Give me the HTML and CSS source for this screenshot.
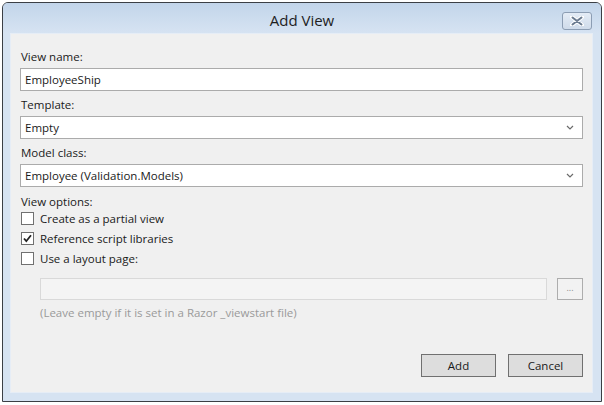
FILE: index.html
```html
<!DOCTYPE html>
<html>
<head>
<meta charset="utf-8">
<link rel="stylesheet" href="styles.css">
</head>
<body>
<div class="window">
  <div class="titlebar">
    <div class="title">Add View</div>
    <div class="close">
      <svg width="14" height="10" viewBox="0 0 14 10">
        <path d="M2 1 L12 9 M12 1 L2 9" stroke="#ffffff" stroke-width="4" stroke-linecap="round"/>
        <path d="M2.5 1.5 L11.5 8.5 M11.5 1.5 L2.5 8.5" stroke="#6b7b90" stroke-width="2" stroke-linecap="round"/>
      </svg>
    </div>
  </div>
  <div class="client">
    <div class="label first">View name:</div>
    <div class="field">EmployeeShip</div>
    <div class="label">Template:</div>
    <div class="field select">Empty<span class="chev"><svg width="8" height="5" viewBox="0 0 8 5"><path d="M1 1 L4 4 L7 1" fill="none" stroke="#6a6a6a" stroke-width="1.2"/></svg></span></div>
    <div class="label">Model class:</div>
    <div class="field select">Employee (Validation.Models)<span class="chev"><svg width="8" height="5" viewBox="0 0 8 5"><path d="M1 1 L4 4 L7 1" fill="none" stroke="#6a6a6a" stroke-width="1.2"/></svg></span></div>
    <div class="label opts">View options:</div>
    <div class="check-row"><span class="box"></span><span>Create as a partial view</span></div>
    <div class="check-row"><span class="box"><svg width="11" height="11" viewBox="0 0 11 11"><path d="M2 5.5 L4.3 8.2 L9 2.2" fill="none" stroke="#222" stroke-width="1.8"/></svg></span><span>Reference script libraries</span></div>
    <div class="check-row"><span class="box"></span><span>Use a layout page:</span></div>
    <div class="layout-row">
      <div class="layout-input"></div>
      <div class="browse">...</div>
    </div>
    <div class="hint">(Leave empty if it is set in a Razor _viewstart file)</div>
    <div class="buttons">
      <div class="btn">Add</div>
      <div class="btn">Cancel</div>
    </div>
  </div>
</div>
</body>
</html>
```
FILE: styles.css
```css
html, body {
  margin: 0;
  padding: 0;
  background: #ffffff;
  width: 604px;
  height: 405px;
  overflow: hidden;
}
body {
  font-family: "Open Sans", "Noto Sans", sans-serif;
  font-size: 11.5px;
  color: #1a1a1a;
}
.window {
  position: relative;
  margin: 2px 0 0 2px;
  width: 598px;
  height: 398px;
  border: 1px solid #3b3f45;
  border-radius: 6px 6px 0 0;
  background: #d6e3f2;
  display: flex;
  flex-direction: column;
}
.titlebar {
  height: 30px;
  flex: none;
  border-radius: 5px 5px 0 0;
  background: linear-gradient(#c2d5ea, #d6e3f2);
  display: flex;
  align-items: center;
  justify-content: center;
  position: relative;
}
.title {
  font-size: 15px;
  color: #1e1e1e;
  margin-top: 4px;
}
.close {
  position: absolute;
  right: 9px;
  top: 9px;
  width: 28px;
  height: 16px;
  border: 1px solid #8c9db3;
  border-radius: 3px;
  background: linear-gradient(#e4ecf6, #cfdbea);
  display: flex;
  align-items: center;
  justify-content: center;
}
.client {
  margin: 0 8px 8px 7px;
  flex: 1;
  background: #f0f0f0;
  border: 1px solid #e6edf6;
  padding: 0 9px 0 9px;
  display: flex;
  flex-direction: column;
}
.label {
  height: 16px;
  line-height: 16px;
  margin: 6px 0 3px 1px;
}
.label.first {
  margin-top: 15px;
}
.label.opts {
  margin-top: 7px;
  margin-bottom: -2px;
}
.field {
  height: 21px;
  line-height: 21px;
  border: 1px solid #ababab;
  background: #ffffff;
  padding-left: 4px;
  position: relative;
}
.chev {
  position: absolute;
  right: 8px;
  top: 8px;
  line-height: 0;
}
.check-row {
  height: 20px;
  display: flex;
  align-items: center;
  margin-left: 1px;
}
.box {
  width: 11px;
  height: 11px;
  border: 1px solid #707070;
  background: #ffffff;
  margin-right: 6px;
  display: flex;
  align-items: center;
  justify-content: center;
}
.layout-row {
  display: flex;
  margin-top: 10px;
  padding-left: 20px;
}
.layout-input {
  flex: 1;
  height: 20px;
  border: 1px solid #d9d9d9;
  background: #f4f4f4;
}
.browse {
  width: 24px;
  height: 20px;
  margin-left: 10px;
  border: 1px solid #adadad;
  background: #f2f2f2;
  color: #8a8a8a;
  font-size: 9px;
  line-height: 17px;
  text-align: center;
}
.hint {
  margin: 5px 0 0 20px;
  height: 16px;
  line-height: 16px;
  color: #9a9a9a;
}
.buttons {
  display: flex;
  justify-content: flex-end;
  margin-top: 33px;
  gap: 12px;
}
.btn {
  width: 73px;
  height: 21px;
  line-height: 21px;
  border: 1px solid #707070;
  background: #dddddd;
  text-align: center;
}
```
